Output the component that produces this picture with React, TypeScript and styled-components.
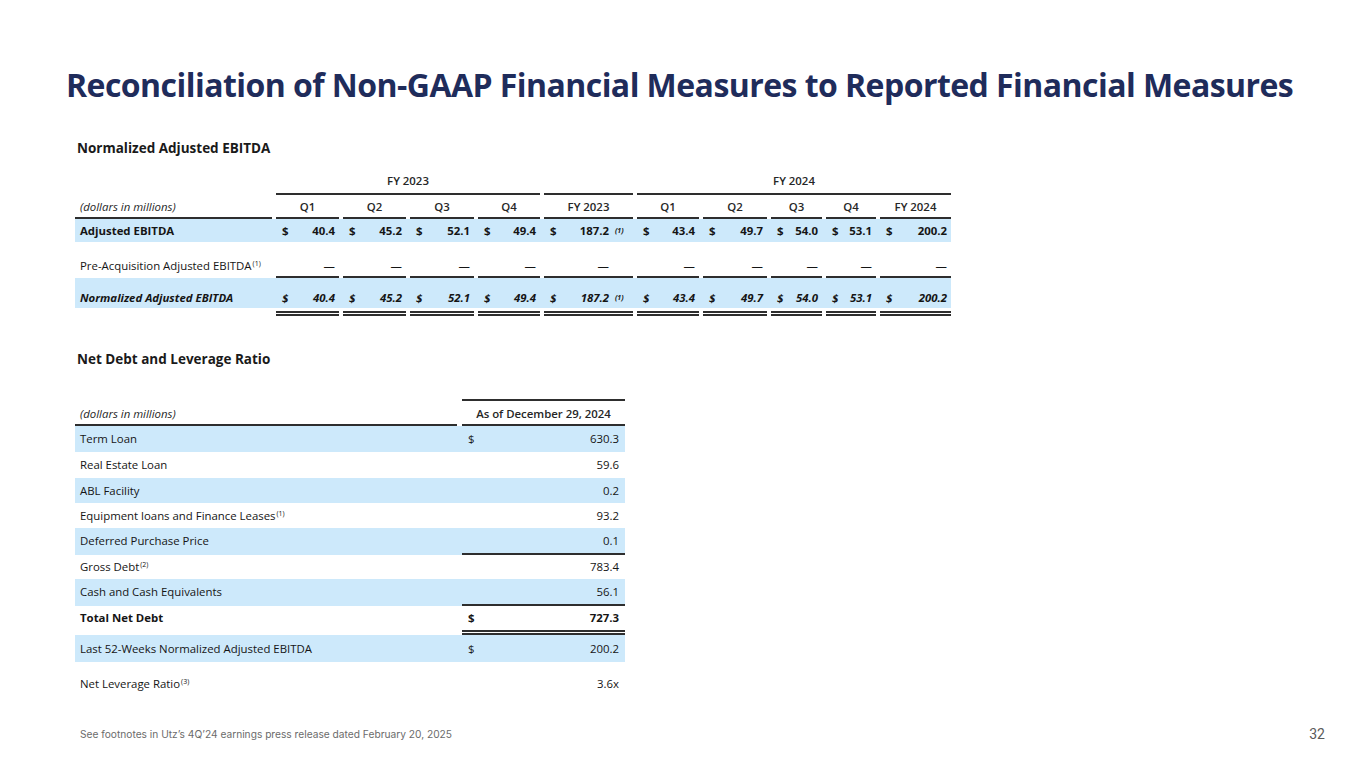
import React from 'react';
import styled, { createGlobalStyle } from 'styled-components';

const GlobalStyle = createGlobalStyle`
  html, body {
    margin: 0;
    padding: 0;
    background: #fff;
  }
  body {
    font-family: "Open Sans", "Liberation Sans", sans-serif;
    color: #151515;
  }
`;

const RULE = '#2e2e2e';
const SHADE = '#cde9fb';
const COLS = '197px 63px 63px 64px 62px 89px 62px 64px 51px 50px 71px';

const Slide = styled.div`
  width: 1365px;
  height: 768px;
  display: flex;
  flex-direction: column;
  overflow: hidden;
  background: #fff;
`;

const Title = styled.h1`
  margin: 65px 0 0 66px;
  font-size: 32px;
  line-height: 40px;
  font-weight: 700;
  color: #1f2c5b;
  letter-spacing: -0.55px;
  white-space: nowrap;
`;

const Content = styled.div`
  margin-left: 75px;
  display: flex;
  flex-direction: column;
`;

const SectionTitle = styled.div<{ $top: number }>`
  margin-top: ${(p) => p.$top}px;
  padding-left: 2px;
  font-size: 13.5px;
  line-height: 18px;
  font-weight: 700;
  color: #1a1a1a;
`;

const Sup = styled.span`
  font-size: 7px;
  line-height: 0;
  vertical-align: 4px;
  margin-left: 1px;
`;

/* ---------- table 1 ---------- */

const T1 = styled.div`
  margin-top: 17px;
  width: 876px;
  display: flex;
  flex-direction: column;
  font-size: 11.4px;
`;

const T1Row = styled.div<{ $shade?: boolean; $pt: number; $pb: number; $lh: number }>`
  display: grid;
  grid-template-columns: ${COLS};
  column-gap: 4px;
  background: ${(p) => (p.$shade ? SHADE : 'transparent')};

  & > div {
    padding-top: ${(p) => p.$pt}px;
    padding-bottom: ${(p) => p.$pb}px;
    line-height: ${(p) => p.$lh}px;
  }
`;

const HeadCell = styled.div<{ $span?: number; $rule?: boolean; $italic?: boolean; $left?: boolean }>`
  grid-column: span ${(p) => p.$span ?? 1};
  border-bottom: 2px solid ${(p) => (p.$rule ? RULE : 'transparent')};
  text-align: ${(p) => (p.$left ? 'left' : 'center')};
  padding-left: ${(p) => (p.$left ? '5px' : '0')};
  font-weight: ${(p) => (p.$italic ? 400 : 600)};
  font-style: ${(p) => (p.$italic ? 'italic' : 'normal')};
  color: #262626;
  white-space: nowrap;
`;

const LabelCell = styled.div<{ $weight?: number; $italic?: boolean }>`
  padding-left: 5px;
  font-weight: ${(p) => p.$weight ?? 400};
  font-style: ${(p) => (p.$italic ? 'italic' : 'normal')};
  white-space: nowrap;
`;

const ValueCell = styled.div<{ $rule?: boolean; $weight?: number; $italic?: boolean }>`
  display: flex;
  align-items: baseline;
  padding: 0 4px 0 6px;
  ${(p) => (p.$rule ? `border-bottom: 2px solid ${RULE};` : '')}
  font-weight: ${(p) => p.$weight ?? 400};
  font-style: ${(p) => (p.$italic ? 'italic' : 'normal')};
  white-space: nowrap;
`;

const Dollar = styled.span`
  margin-right: auto;
`;

const Note = styled.span`
  width: 20px;
  padding-left: 6px;
  box-sizing: border-box;
  font-size: 7px;
  line-height: 0;
  font-weight: 700;
  font-style: italic;
  position: relative;
  top: -2px;
`;

const RuleRow = styled.div`
  display: grid;
  grid-template-columns: ${COLS};
  column-gap: 4px;
`;

const DoubleRule = styled.div<{ $on?: boolean }>`
  height: 3px;
  border-bottom: 5px double ${(p) => (p.$on ? RULE : 'transparent')};
`;

/* ---------- table 2 ---------- */

const T2 = styled.div`
  margin-top: 31px;
  width: 550px;
  display: flex;
  flex-direction: column;
  font-size: 11.4px;
`;

const T2Row = styled.div<{ $shade?: boolean; $lh: number; $pt?: number }>`
  display: grid;
  grid-template-columns: 382px 163px;
  column-gap: 5px;
  background: ${(p) => (p.$shade ? SHADE : 'transparent')};
  line-height: ${(p) => p.$lh}px;

  & > div {
    padding-top: ${(p) => p.$pt ?? 0}px;
  }
`;

const T2HeadRow = styled.div`
  display: grid;
  grid-template-columns: 382px 163px;
  column-gap: 5px;
  line-height: 14px;

  & > div {
    padding-top: 6px;
    padding-bottom: 3px;
    border-top: 2px solid transparent;
    border-bottom: 2px solid ${RULE};
    color: #262626;
  }
`;

const T2HeadLabel = styled.div`
  padding-left: 5px;
  font-style: italic;
`;

const T2Head = styled.div`
  && {
    border-top-color: ${RULE};
  }
  text-align: center;
  font-weight: 600;
`;

const T2Label = styled.div<{ $bold?: boolean }>`
  padding-left: 5px;
  font-weight: ${(p) => (p.$bold ? 700 : 400)};
  white-space: nowrap;
`;

const T2Value = styled.div<{ $rule?: 'single' | 'double'; $bold?: boolean }>`
  display: flex;
  align-items: baseline;
  padding: 0 6px;
  font-weight: ${(p) => (p.$bold ? 700 : 400)};
  ${(p) =>
    p.$rule === 'single'
      ? `border-bottom: 2px solid ${RULE};`
      : p.$rule === 'double'
      ? `border-bottom: 5px double ${RULE};`
      : ''}
`;

/* ---------- footer ---------- */

const Footer = styled.div`
  margin-top: auto;
  padding: 0 40px 24px 80px;
  display: flex;
  justify-content: space-between;
  align-items: center;
  height: 20px;
`;

const FootNote = styled.span`
  font-family: Inter, "Liberation Sans", sans-serif;
  font-size: 10.2px;
  color: #6b6b6b;
`;

const PageNum = styled.span`
  font-family: Roboto, "Liberation Sans", sans-serif;
  font-size: 14px;
  color: #5a5a5a;
`;

const adjusted = ['40.4', '45.2', '52.1', '49.4', '187.2', '43.4', '49.7', '54.0', '53.1', '200.2'];
const quarters = ['Q1', 'Q2', 'Q3', 'Q4', 'FY 2023', 'Q1', 'Q2', 'Q3', 'Q4', 'FY 2024'];

type DebtRow = {
  label: string;
  sup?: string;
  value: string;
  dollar?: boolean;
  shade?: boolean;
  bold?: boolean;
  rule?: 'single' | 'double';
  lh: number;
  pt?: number;
};

const debtRows: DebtRow[] = [
  { label: 'Term Loan', value: '630.3', dollar: true, shade: true, lh: 26 },
  { label: 'Real Estate Loan', value: '59.6', lh: 25.5 },
  { label: 'ABL Facility', value: '0.2', shade: true, lh: 25 },
  { label: 'Equipment loans and Finance Leases', sup: '(1)', value: '93.2', lh: 25.5 },
  { label: 'Deferred Purchase Price', value: '0.1', shade: true, rule: 'single', lh: 25 },
  { label: 'Gross Debt', sup: '(2)', value: '783.4', lh: 24 },
  { label: 'Cash and Cash Equivalents', value: '56.1', shade: true, rule: 'single', lh: 25 },
  { label: 'Total Net Debt', value: '727.3', dollar: true, bold: true, rule: 'double', lh: 24 },
  { label: 'Last 52-Weeks Normalized Adjusted EBITDA', value: '200.2', dollar: true, shade: true, lh: 27 },
  { label: 'Net Leverage Ratio', sup: '(3)', value: '3.6x', lh: 14, pt: 15 },
];

const App: React.FC = () => {
  return (
    <>
      <GlobalStyle />
      <Slide>
        <Title>Reconciliation of Non-GAAP Financial Measures to Reported Financial Measures</Title>
        <Content>
          <SectionTitle $top={34}>Normalized Adjusted EBITDA</SectionTitle>
          <T1>
            <T1Row $pt={0} $pb={5} $lh={14}>
              <HeadCell />
              <HeadCell $span={4} $rule>FY 2023</HeadCell>
              <HeadCell $rule />
              <HeadCell $span={5} $rule>FY 2024</HeadCell>
            </T1Row>
            <T1Row $pt={5} $pb={3} $lh={14}>
              <HeadCell $left $italic $rule>(dollars in millions)</HeadCell>
              {quarters.map((q, i) => (
                <HeadCell key={i} $rule>
                  {q}
                </HeadCell>
              ))}
            </T1Row>
            <T1Row $shade $pt={0} $pb={0} $lh={23}>
              <LabelCell $weight={700}>Adjusted EBITDA</LabelCell>
              {adjusted.map((v, i) => (
                <ValueCell key={i} $weight={700}>
                  <Dollar>$</Dollar>
                  {v}
                  {i === 4 && <Note>(1)</Note>}
                </ValueCell>
              ))}
            </T1Row>
            <T1Row $pt={17} $pb={3} $lh={14}>
              <LabelCell>
                Pre-Acquisition Adjusted EBITDA<Sup>(1)</Sup>
              </LabelCell>
              {adjusted.map((_, i) => (
                <ValueCell key={i} $rule>
                  <Dollar />—{i === 4 && <Note />}
                </ValueCell>
              ))}
            </T1Row>
            <T1Row $shade $pt={13} $pb={3} $lh={14}>
              <LabelCell $weight={700} $italic>
                Normalized Adjusted EBITDA
              </LabelCell>
              {adjusted.map((v, i) => (
                <ValueCell key={i} $weight={700} $italic>
                  <Dollar>$</Dollar>
                  {v}
                  {i === 4 && <Note>(1)</Note>}
                </ValueCell>
              ))}
            </T1Row>
            <RuleRow>
              <DoubleRule />
              {adjusted.map((_, i) => (
                <DoubleRule key={i} $on />
              ))}
            </RuleRow>
          </T1>

          <SectionTitle $top={34}>Net Debt and Leverage Ratio</SectionTitle>
          <T2>
            <T2HeadRow>
              <T2HeadLabel>(dollars in millions)</T2HeadLabel>
              <T2Head>As of December 29, 2024</T2Head>
            </T2HeadRow>
            {debtRows.map((r) => (
              <T2Row key={r.label} $shade={r.shade} $lh={r.lh} $pt={r.pt}>
                <T2Label $bold={r.bold}>
                  {r.label}
                  {r.sup && <Sup>{r.sup}</Sup>}
                </T2Label>
                <T2Value $rule={r.rule} $bold={r.bold}>
                  <Dollar>{r.dollar ? '$' : ''}</Dollar>
                  {r.value}
                </T2Value>
              </T2Row>
            ))}
          </T2>
        </Content>
        <Footer>
          <FootNote>See footnotes in Utz’s 4Q’24 earnings press release dated February 20, 2025</FootNote>
          <PageNum>32</PageNum>
        </Footer>
      </Slide>
    </>
  );
};

export default App;
